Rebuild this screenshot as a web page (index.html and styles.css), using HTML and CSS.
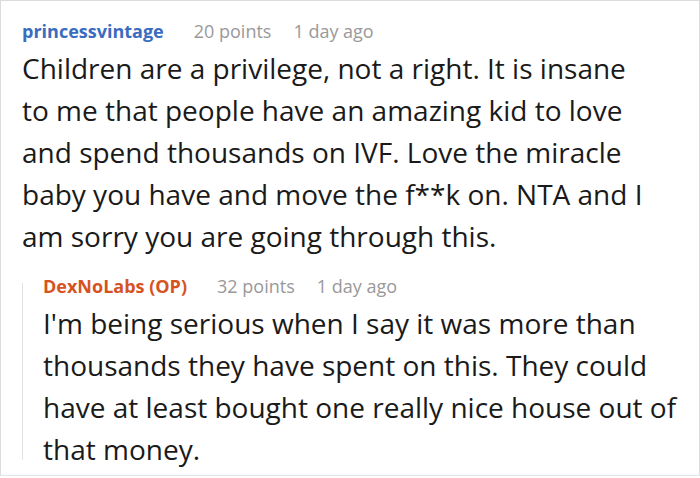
FILE: index.html
```html
<!DOCTYPE html>
<html lang="en">
<head>
  <meta charset="UTF-8">
  <title>Comments</title>
  <link rel="stylesheet" href="styles.css">
</head>
<body>

<div class="thread">
  <!-- Commentaire principal -->
  <div class="comment">
    <div class="meta">
      <span class="author">princessvintage</span>
      <span class="points">20 points</span>
      <span class="date">1 day ago</span>
    </div>
    <p class="text">Children are a privilege, not a right. It is insane to me that people have an amazing kid to love and spend thousands on IVF. Love the miracle baby you have and move the f**k on. NTA and I am sorry you are going through this.</p>
  </div>

  <!-- Réponse de l'OP -->
  <div class="reply">
    <div class="meta">
      <span class="author op">DexNoLabs (OP)</span>
      <span class="points">32 points</span>
      <span class="date">1 day ago</span>
    </div>
    <p class="text">I'm being serious when I say it was more than thousands they have spent on this. They could have at least bought one really nice house out of that money.</p>
  </div>
</div>

</body>
</html>
```

FILE: styles.css
```css
body {
  margin: 0;
  font-family: "Open Sans", Arial, sans-serif;
  background-color: #ffffff;
}
.thread {
  width: 698px;
  height: 474px;
  border: 1px solid #dcdcdc;
  border-bottom-color: #e4e4e4;
}
.comment {
  padding: 18px 44px 0 21px;
}
.meta {
  display: flex;
  align-items: baseline;
  gap: 30px;
  font-size: 18px;
  line-height: 24px;
  color: #999999;
  white-space: nowrap;
}
.author {
  font-weight: bold;
  color: #3a6cc0;
}
.author.op {
  color: #d6531f;
}
.date {
  margin-left: -8px;
}
.text {
  margin: 4px 0 0 0;
  font-size: 28px;
  line-height: 42px;
  color: #1a1a1a;
}
.reply {
  position: relative;
  margin: 17px 0 0 21px;
  padding: 0 12px 0 21px;
}
.reply::before {
  content: "";
  position: absolute;
  left: 0;
  top: 9px;
  bottom: 10px;
  width: 1px;
  background-color: #e2e2e2;
}
```
